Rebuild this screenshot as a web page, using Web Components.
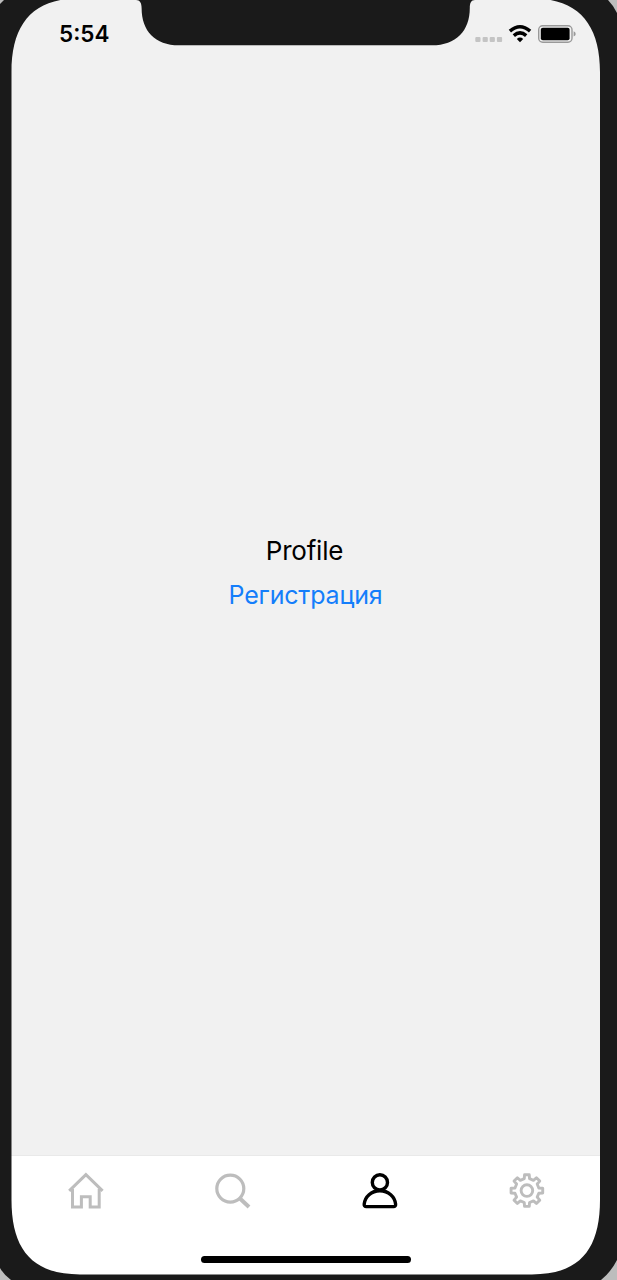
<!DOCTYPE html>
<html lang="ru">
<head>
<meta charset="utf-8">
<meta name="viewport" content="width=device-width, initial-scale=1">
<title>Profile</title>
<style>
    body {
        margin: 0;
        overflow: hidden;
        background: #1a1a1a;
        font-family: Inter, "Liberation Sans", sans-serif;
    }
</style>
</head>
<body>
<phone-frame>
    <status-bar slot="status" time="5:54"></status-bar>
    <profile-screen>
        <span slot="title">Profile</span>
        <span slot="action">Регистрация</span>
    </profile-screen>
    <tab-bar slot="tabs">
        <tab-item icon="home"></tab-item>
        <tab-item icon="search"></tab-item>
        <tab-item icon="profile" active></tab-item>
        <tab-item icon="settings"></tab-item>
    </tab-bar>
</phone-frame>

<script>
class PhoneFrame extends HTMLElement {
    constructor() {
        super();
        this.attachShadow({ mode: 'open' });
    }

    connectedCallback() {
        this.shadowRoot.innerHTML = `
            <style>
                :host {
                    display: block;
                    position: relative;
                    width: 617px;
                    height: 1280px;
                    box-sizing: border-box;
                    padding: 0 17px 5px 11px;
                    background: #1a1a1a;
                }
                .screen {
                    display: flex;
                    flex-direction: column;
                    height: 100%;
                    background: #f1f1f1;
                }
                .bezel {
                    position: absolute;
                    inset: 0;
                    pointer-events: none;
                }
            </style>
            <div class="screen">
                <slot name="status"></slot>
                <slot></slot>
                <slot name="tabs"></slot>
            </div>
            <svg class="bezel" width="617" height="1280" viewBox="0 0 617 1280">
                <path fill="#1a1a1a" fill-rule="evenodd" d="M0 -10H617V1280H0Z
                    M11.5 72V1200C11.5 1249 32 1274.4 80 1274.4H532C580 1274.4 600 1249 600 1200V72C600 25 579 -1.500 533 -1.500H78C32 -1.500 11.500 25 11.500 72Z"/>
                <path fill="#1a1a1a" d="M136 0C140 0 141.600 3 141.600 8C141.600 31 155 45.300 179 45.300H432C456 45.300 469.800 31 469.800 8C469.800 3 471 0 475 0Z"/>
                <g fill="#bdbdbd">
                    <path d="M0 0H4L0 4Z"/>
                    <path d="M608 0H617V13Q613 5 608 0Z"/>
                    <path d="M0 1268Q4 1275 11 1280H0Z"/>
                    <path d="M617 1260Q611 1272 601 1280H617Z"/>
                </g>
            </svg>
        `;
    }
}

class StatusBar extends HTMLElement {
    constructor() {
        super();
        this.attachShadow({ mode: 'open' });
    }

    connectedCallback() {
        this.shadowRoot.innerHTML = `
            <style>
                :host {
                    display: flex;
                    flex: none;
                    justify-content: space-between;
                    align-items: flex-start;
                    height: 95px;
                    box-sizing: border-box;
                    padding: 20px 23px 0 48px;
                    color: #000;
                }
                .time {
                    font-size: 22.5px;
                    line-height: 28px;
                    font-weight: 600;
                }
                svg {
                    display: block;
                }
            </style>
            <div class="time">${this.getAttribute('time')}</div>
            <svg width="102" height="28" viewBox="475 20 102 28">
                <g fill="#c4c4c4">
                    <rect x="475.300" y="37" width="5.200" height="5" rx="1"/>
                    <rect x="482.600" y="37" width="5.200" height="5" rx="1"/>
                    <rect x="489.700" y="37" width="5.200" height="5" rx="1"/>
                    <rect x="496.900" y="37" width="5.200" height="5" rx="1"/>
                </g>
                <g fill="none" stroke="#000" stroke-width="3.500">
                    <path d="M509.900 31.100Q520 22.500 530.100 31.100"/>
                    <path d="M513.800 35.600Q520 30.200 526.200 35.600"/>
                </g>
                <path d="M516.800 39Q520 36.200 523.200 39L520 42.200Z"/>
                <rect x="538.700" y="25.700" width="33.300" height="16.600" rx="4" fill="none" stroke="#999" stroke-width="1.400"/>
                <rect x="540.800" y="27.800" width="28.800" height="12.400" rx="2"/>
                <path fill="#999" d="M573.600 31.200Q575.700 32 575.700 33.900T573.600 36.600Z"/>
            </svg>
        `;
    }
}

class ProfileScreen extends HTMLElement {
    constructor() {
        super();
        this.attachShadow({ mode: 'open' });
    }

    connectedCallback() {
        this.shadowRoot.innerHTML = `
            <style>
                :host {
                    display: flex;
                    flex: 1;
                    flex-direction: column;
                    align-items: center;
                    justify-content: center;
                    gap: 10px;
                    padding-bottom: 105px;
                }
                .title {
                    padding-right: 2px;
                    font-size: 26px;
                    line-height: 34px;
                    letter-spacing: -0.2px;
                    color: #000;
                }
                button {
                    padding: 0;
                    border: 0;
                    background: none;
                    font: 25px/34px Inter, "Liberation Sans", sans-serif;
                    letter-spacing: -0.2px;
                    color: #147efb;
                    cursor: pointer;
                }
            </style>
            <div class="title"><slot name="title"></slot></div>
            <button><slot name="action"></slot></button>
        `;
    }
}

class TabBar extends HTMLElement {
    constructor() {
        super();
        this.attachShadow({ mode: 'open' });
    }

    connectedCallback() {
        this.shadowRoot.innerHTML = `
            <style>
                :host {
                    display: flex;
                    flex: none;
                    flex-direction: column;
                    align-items: center;
                    justify-content: space-between;
                    height: 120px;
                    box-sizing: border-box;
                    padding: 15px 0 12px;
                    border-top: 1px solid #e9e9e9;
                    background: #fff;
                }
                .tabs {
                    display: grid;
                    grid-template-columns: repeat(4, 1fr);
                    width: 100%;
                }
                .indicator {
                    width: 210px;
                    height: 7px;
                    border-radius: 4px;
                    background: #000;
                }
            </style>
            <div class="tabs"><slot></slot></div>
            <div class="indicator"></div>
        `;
    }
}

const ICONS = {
    home: `
        <g stroke-width="3">
            <path d="M4.200 19.800L20.900 3.600L37.600 19.800"/>
            <path d="M7.500 18V36H16.400V25.800H25.200V36H34.200V18"/>
        </g>`,
    search: `
        <circle cx="18.300" cy="17.600" r="13.500" stroke-width="3.200"/>
        <path stroke-width="4" d="M28.200 27.800L37 36"/>`,
    profile: `
        <g stroke-width="3.400" stroke-linejoin="round">
            <circle cx="20.900" cy="11.400" r="7.600"/>
            <path d="M20.900 19.800C12.200 19.800 5.900 25.900 5.200 33.200Q5 35.600 7.300 35.600H34.500Q36.800 35.600 36.600 33.200C35.900 25.900 29.600 19.800 20.900 19.800Z"/>
        </g>`
};

// Eight rounded teeth around the hub
function gearIcon() {
    const points = [];
    const shape = [[-12.5, 12.2], [-8.5, 16], [8.5, 16], [12.5, 12.2]];
    for (let i = 0; i < 8; i++) {
        shape.forEach(([offset, radius]) => {
            const angle = (i * 45 + offset) * Math.PI / 180;
            points.push(`${(20.9 + radius * Math.sin(angle)).toFixed(2)} ${(19.6 - radius * Math.cos(angle)).toFixed(2)}`);
        });
    }
    return `
        <path stroke-width="2.900" stroke-linejoin="round" d="M${points.join('L')}Z"/>
        <circle cx="20.900" cy="19.600" r="5.800" stroke-width="2.900"/>`;
}

ICONS.settings = gearIcon();

class TabItem extends HTMLElement {
    constructor() {
        super();
        this.attachShadow({ mode: 'open' });
    }

    connectedCallback() {
        this.shadowRoot.innerHTML = `
            <style>
                :host {
                    display: flex;
                    justify-content: center;
                    color: #bdbdbd;
                }
                :host([active]) {
                    color: #000;
                }
                svg {
                    display: block;
                }
            </style>
            <svg width="40" height="40" viewBox="0 0 40 40" fill="none" stroke="currentColor">
                ${ICONS[this.getAttribute('icon')]}
            </svg>
        `;
    }
}

customElements.define('phone-frame', PhoneFrame);
customElements.define('status-bar', StatusBar);
customElements.define('profile-screen', ProfileScreen);
customElements.define('tab-bar', TabBar);
customElements.define('tab-item', TabItem);
</script>
</body>
</html>
